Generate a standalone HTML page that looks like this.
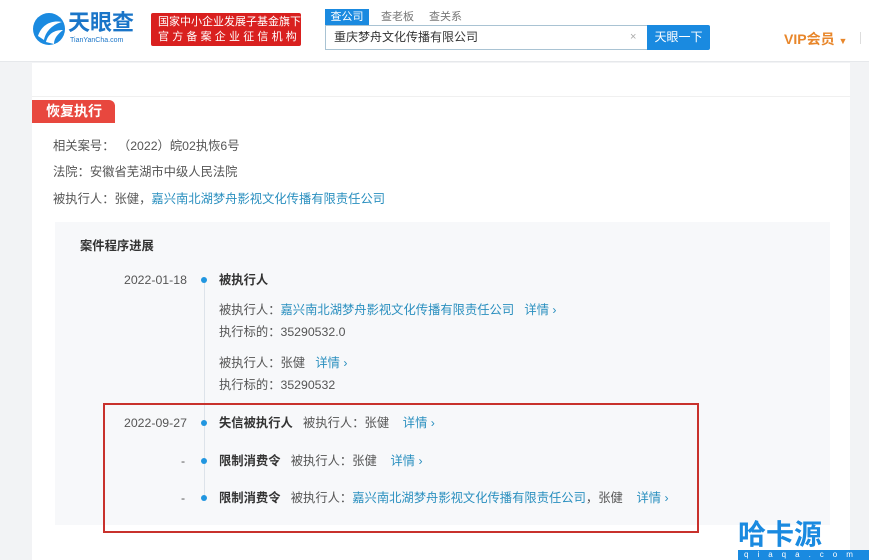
<!DOCTYPE html>
<html><head><meta charset="utf-8"><style>
*{margin:0;padding:0;box-sizing:border-box}
body{width:869px;height:560px;overflow:hidden;background:#f2f3f5;font-family:"Liberation Sans","Noto Sans CJK SC",sans-serif;font-size:12.3px;color:#555;position:relative}
.a{position:absolute;white-space:nowrap}
.hdr{position:absolute;left:0;top:0;width:869px;height:62px;background:#fff;border-bottom:1px solid #e6e8eb}
.card{position:absolute;left:32px;top:63px;width:818px;height:497px;background:#fff}
.lk{color:#2a8fbf}
.b{color:#333;font-weight:bold}
.dot{position:absolute;width:6px;height:6px;border-radius:3px;background:#2196e0}
.t{line-height:16px}
</style></head><body>
<div class="hdr">
  <svg class="a" style="left:32px;top:12px" width="34" height="34" viewBox="0 0 34 34"><circle cx="17" cy="17" r="16" fill="#1a8ae0"/><path d="M6 24 C10 12 20 8 30 10 C22 12 14 18 12 28 Z" fill="#fff"/><path d="M14 30 C16 22 22 18 31 18 C26 22 22 26 22 32Z" fill="#fff"/></svg>
  <div class="a" style="left:68px;top:10px;font-size:22px;font-weight:bold;color:#1a75c8;line-height:26px">天眼查</div>
  <div class="a" style="left:70px;top:37px;font-size:7px;color:#1a75c8">TianYanCha.com</div>
  <div class="a" style="left:151px;top:13px;width:150px;height:33px;background:#d9201f;border-radius:2px;color:#fff;font-size:11px;line-height:15px;padding:2px 0 0 7px">国家中小企业发展子基金旗下<br><span style="letter-spacing:3.2px">官方备案企业征信机构</span></div>
  <div class="a" style="left:325px;top:9px;width:44px;height:16px;background:#1a8ae0;color:#fff;font-size:11px;line-height:16px;text-align:center">查公司</div>
  <div class="a" style="left:381px;top:9px;font-size:11px;color:#777;line-height:16px">查老板</div>
  <div class="a" style="left:429px;top:9px;font-size:11px;color:#777;line-height:16px">查关系</div>
  <div class="a" style="left:325px;top:25px;width:323px;height:25px;border:1px solid #a9c3d3;border-right:none;font-size:12px;color:#333;line-height:23px;padding-left:8px">重庆梦舟文化传播有限公司<span style="position:absolute;left:304px;color:#aaa;font-size:11px">×</span></div>
  <div class="a" style="left:647px;top:25px;width:63px;height:25px;background:#1a8ae0;border-radius:0 2px 2px 0;color:#fff;font-size:12px;line-height:25px;text-align:center">天眼一下</div>
  <div class="a" style="left:784px;top:29px;font-size:14px;font-weight:bold;color:#e8862a">VIP会员 <span style="font-size:9px">▼</span></div>
  <div class="a" style="left:860px;top:32px;width:1px;height:12px;background:#ddd"></div>
</div>
<div class="card">
  <div class="a" style="left:0;top:33px;width:818px;height:1px;background:#f0f0f0"></div>
  <div class="a" style="left:0;top:37px;width:83px;height:23px;background:#e8473e;border-radius:0 6px 0 0;color:#fff;font-weight:bold;font-size:14px;line-height:23px;padding-left:14px">恢复执行</div>
</div>
<div class="a t" style="left:53px;top:138px">相关案号：&nbsp;（2022）皖02执恢6号</div>
<div class="a t" style="left:53px;top:164px">法院：安徽省芜湖市中级人民法院</div>
<div class="a t" style="left:53px;top:191px">被执行人：张健，<span class="lk">嘉兴南北湖梦舟影视文化传播有限责任公司</span></div>
<div class="a" style="left:55px;top:222px;width:775px;height:303px;background:#f7f8fa"></div>
<div class="a t b" style="left:80px;top:238px;font-size:12.3px">案件程序进展</div>
<div class="a" style="left:204px;top:282px;width:1px;height:215px;background:#dde3ea"></div>
<div class="a t" style="left:124px;top:272px">2022-01-18</div><div class="dot" style="left:201px;top:277px"></div>
<div class="a t b" style="left:219px;top:272px">被执行人</div>
<div class="a t" style="left:219px;top:302px">被执行人：<span class="lk">嘉兴南北湖梦舟影视文化传播有限责任公司&nbsp;&nbsp;&nbsp;详情 ›</span></div>
<div class="a t" style="left:219px;top:324px">执行标的：35290532.0</div>
<div class="a t" style="left:219px;top:355px">被执行人：张健&nbsp;&nbsp;&nbsp;<span class="lk">详情 ›</span></div>
<div class="a t" style="left:219px;top:377px">执行标的：35290532</div>
<div class="a t" style="left:124px;top:415px">2022-09-27</div><div class="dot" style="left:201px;top:420px"></div>
<div class="a t" style="left:219px;top:415px"><span class="b">失信被执行人</span>&nbsp;&nbsp;&nbsp;被执行人：张健&nbsp;&nbsp;&nbsp;&nbsp;<span class="lk">详情 ›</span></div>
<div class="a t" style="left:181px;top:453px">-</div><div class="dot" style="left:201px;top:458px"></div>
<div class="a t" style="left:219px;top:453px"><span class="b">限制消费令</span>&nbsp;&nbsp;&nbsp;被执行人：张健&nbsp;&nbsp;&nbsp;&nbsp;<span class="lk">详情 ›</span></div>
<div class="a t" style="left:181px;top:490px">-</div><div class="dot" style="left:201px;top:495px"></div>
<div class="a t" style="left:219px;top:490px"><span class="b">限制消费令</span>&nbsp;&nbsp;&nbsp;被执行人：<span class="lk">嘉兴南北湖梦舟影视文化传播有限责任公司</span>，张健&nbsp;&nbsp;&nbsp;&nbsp;<span class="lk">详情 ›</span></div>
<div class="a" style="left:103px;top:403px;width:596px;height:130px;border:2px solid #c8312c"></div>
<div class="a" style="left:738px;top:520px;font-size:28px;color:#1a8ae0;line-height:30px;font-weight:bold">哈卡源</div>
<div class="a" style="left:738px;top:550px;width:131px;height:10px;background:#1a8ae0;color:#fff;font-size:8px;line-height:10px;letter-spacing:9px;padding-left:6px">qiaqa.com</div>
</body></html>
